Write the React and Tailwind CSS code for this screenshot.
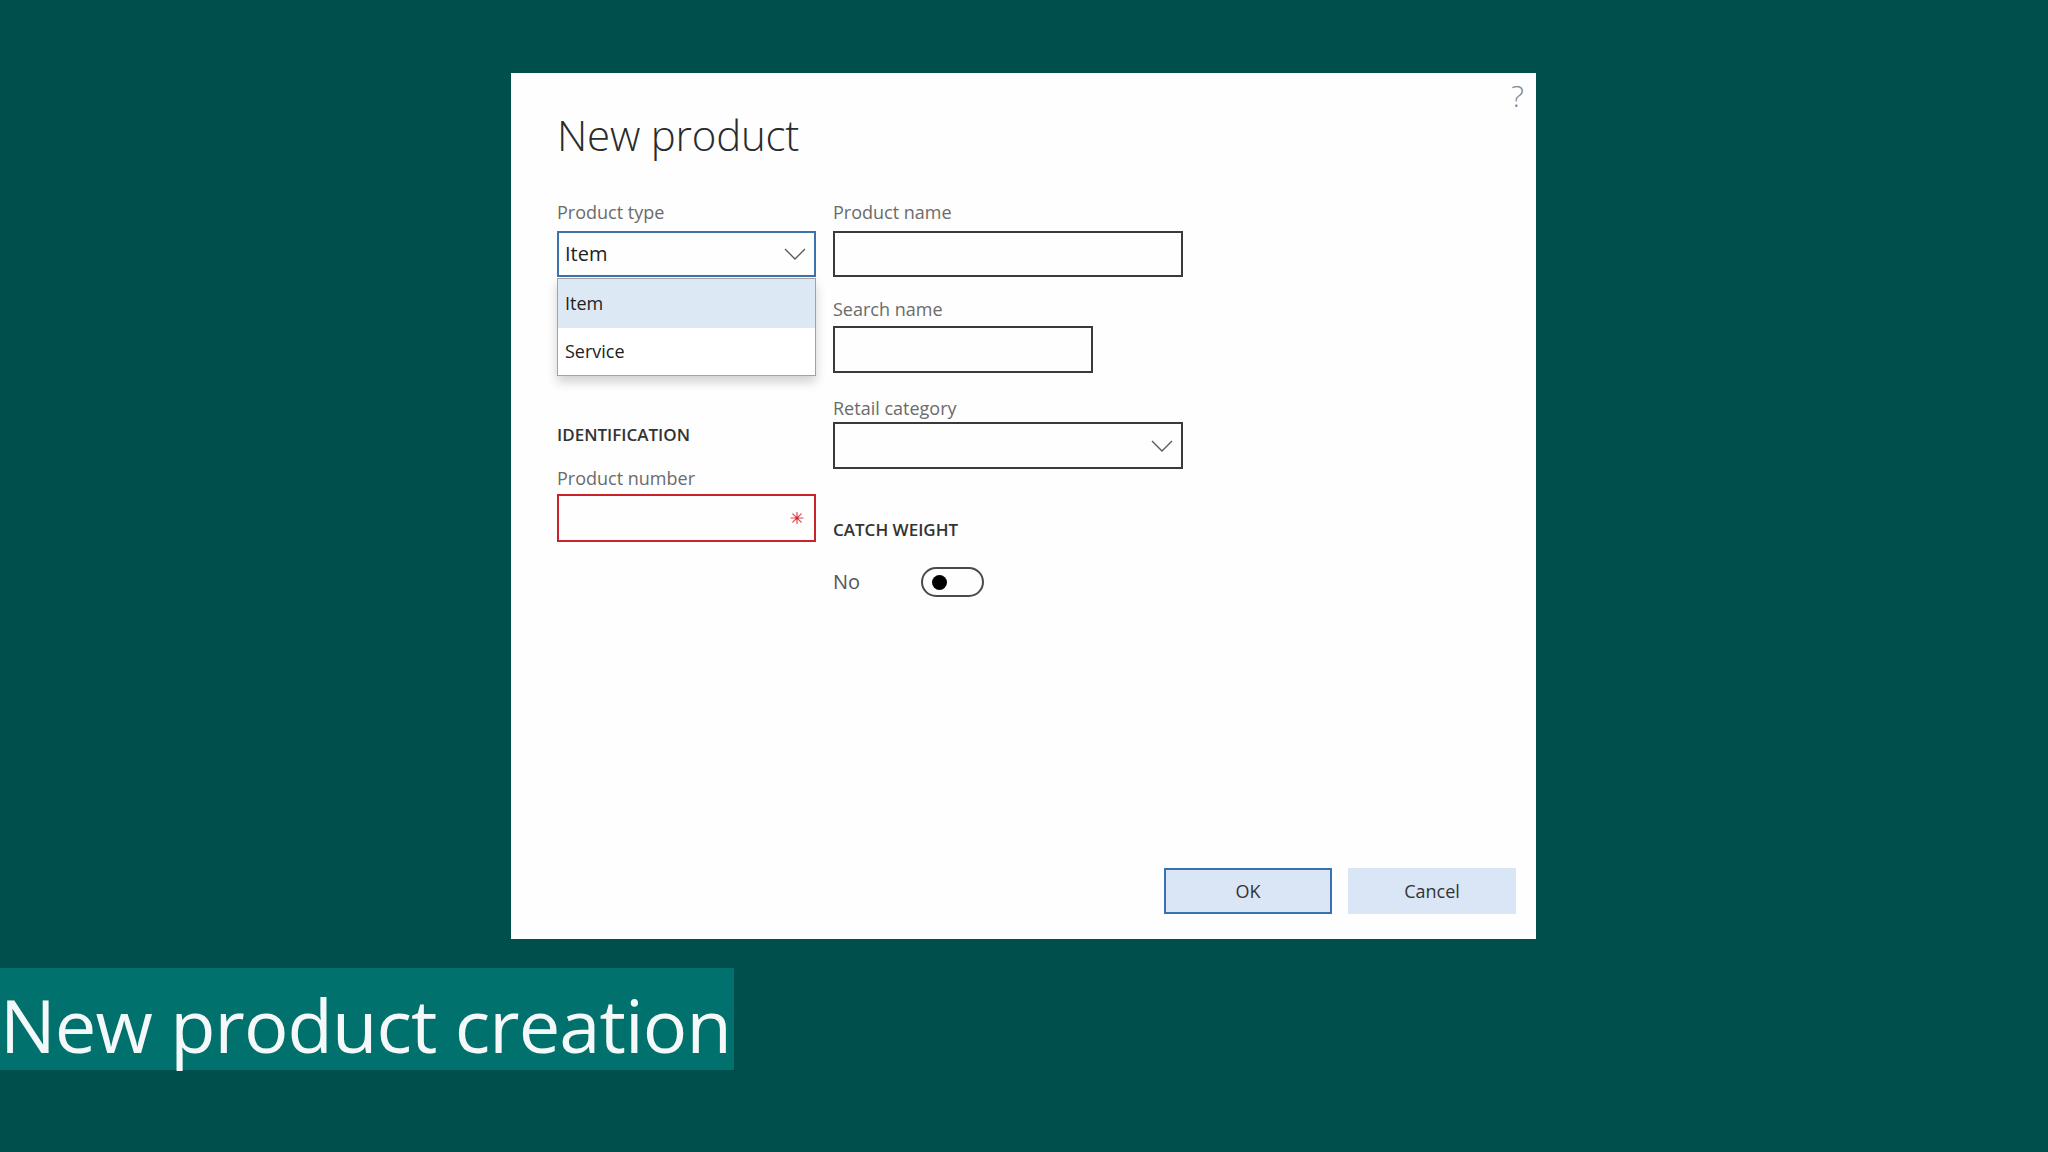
import React from "react";

const font = { fontFamily: '"Open Sans", "Noto Sans", sans-serif' };

function Chevron() {
  return (
    <svg width="22" height="12" viewBox="0 0 22 12" className="shrink-0">
      <polyline points="1,1 11,11 21,1" fill="none" stroke="#5a5a5a" strokeWidth="1.4" />
    </svg>
  );
}

function Asterisk() {
  return (
    <svg width="14" height="14" viewBox="0 0 14 14">
      <g stroke="#e0474c" strokeWidth="1.2" strokeLinecap="round">
        <line x1="1" y1="7" x2="13" y2="7" />
        <line x1="7" y1="1.5" x2="7" y2="12.5" />
        <line x1="2.8" y1="2.8" x2="11.2" y2="11.2" />
        <line x1="11.2" y1="2.8" x2="2.8" y2="11.2" />
      </g>
      <circle cx="7" cy="7" r="1.6" fill="#d0262c" />
    </svg>
  );
}

function Label({ children, className = "" }) {
  return (
    <div className={"h-[24px] text-[18px] leading-[24px] text-[#6b6b6b] whitespace-nowrap " + className}>
      {children}
    </div>
  );
}

export default function App() {
  return (
    <div className="w-[2048px] h-[1152px] bg-[#014f4c] flex flex-col overflow-hidden" style={font}>
      {/* Dialog */}
      <div className="relative ml-[511px] mt-[73px] w-[1025px] h-[866px] bg-[#fdfefd] flex flex-col pl-[46px] pt-[34px]">
        <div className="absolute right-[12px] top-[3px] text-[30px] leading-[40px] font-light text-[#8a8a8a]">?</div>

        <div className="h-[56px] text-[42px] leading-[56px] font-light text-[#2b2b2b] tracking-[-0.2px]">New product</div>

        <div className="mt-[37px] flex gap-[17px]">
          {/* Column 1 */}
          <div className="w-[259px] flex flex-col">
            <Label>Product type</Label>
            <div className="relative mt-[7px]">
              <div className="h-[46px] border-2 border-[#3c72ad] flex items-center justify-between pl-[6px] pr-[8px] text-[20px] text-[#222]">
                <span>Item</span>
                <Chevron />
              </div>
              <div className="absolute left-0 top-[47px] w-[259px] z-10 bg-white border border-[#a3a3a3] shadow-[0_6px_10px_rgba(0,0,0,0.18)]">
                <div className="h-[49px] bg-[#dde8f5] flex items-center pl-[7px] text-[18px] text-[#222]">Item</div>
                <div className="h-[47px] flex items-center pl-[7px] text-[18px] text-[#222]">Service</div>
              </div>
            </div>
            <div className="mt-[146px] h-[24px] text-[17px] leading-[24px] font-semibold text-[#333]">IDENTIFICATION</div>
            <Label className="mt-[19px]">Product number</Label>
            <div className="mt-[4px] h-[48px] border-2 border-[#c8232a] flex items-center justify-end pr-[10px]">
              <Asterisk />
            </div>
          </div>

          {/* Column 2 */}
          <div className="w-[350px] flex flex-col">
            <Label>Product name</Label>
            <div className="mt-[7px] h-[46px] w-[350px] border-2 border-[#3a3a3a]" />
            <Label className="mt-[20px]">Search name</Label>
            <div className="mt-[5px] h-[47px] w-[260px] border-2 border-[#3a3a3a]" />
            <Label className="mt-[23px]">Retail category</Label>
            <div className="mt-[2px] h-[47px] w-[350px] border-2 border-[#3a3a3a] flex items-center justify-end pr-[8px]">
              <Chevron />
            </div>
            <div className="mt-[49px] h-[24px] text-[17px] leading-[24px] font-semibold text-[#333]">CATCH WEIGHT</div>
            <div className="mt-[25px] h-[30px] flex items-center">
              <span className="w-[88px] text-[20px] leading-[30px] text-[#555]">No</span>
              <div className="w-[63px] h-[30px] rounded-full border-2 border-[#4a4a4a] flex items-center pl-[9px]">
                <div className="w-[15px] h-[15px] rounded-full bg-black" />
              </div>
            </div>
          </div>
        </div>

        <div className="mt-auto mb-[25px] mr-[20px] flex justify-end gap-[16px]">
          <div className="w-[168px] h-[46px] bg-[#dae6f5] border-2 border-[#3a71b0] flex items-center justify-center text-[18px] text-[#333]">OK</div>
          <div className="w-[168px] h-[46px] bg-[#dae6f5] flex items-center justify-center text-[18px] text-[#333]">Cancel</div>
        </div>
      </div>

      {/* Caption */}
      <div className="mt-[29px] w-[734px] h-[102px] bg-[#00716c] flex items-center pt-[12px]">
        <span className="text-[74px] leading-[90px] text-[#f4f8f8] tracking-[-0.9px] whitespace-nowrap">New product creation</span>
      </div>
    </div>
  );
}
